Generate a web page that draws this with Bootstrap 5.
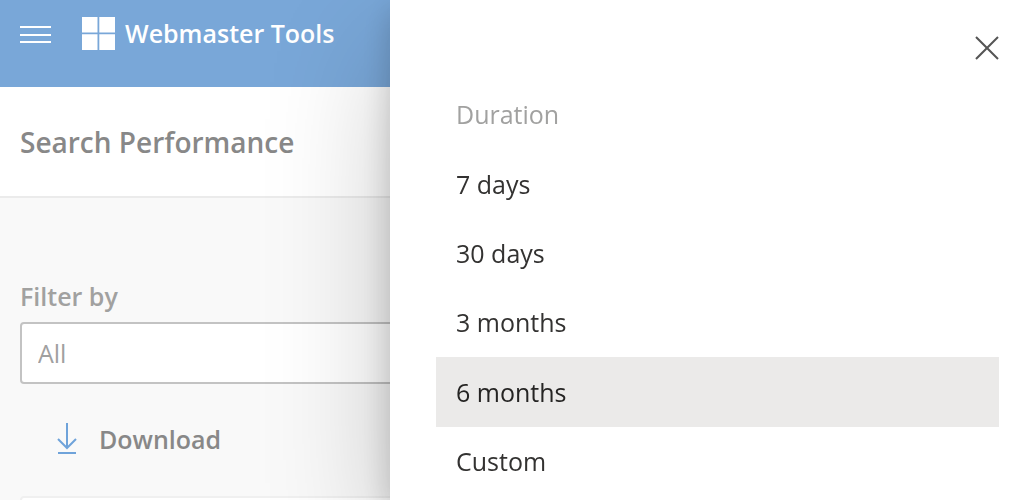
<!DOCTYPE html>
<html lang="en">
<head>
<meta charset="utf-8">
<meta name="viewport" content="width=device-width, initial-scale=1">
<title>Search Performance - Webmaster Tools</title>
<link href="https://cdn.jsdelivr.net/npm/bootstrap@5.3.0/dist/css/bootstrap.min.css" rel="stylesheet">
<style>
  body { font-family: "Segoe UI", "Open Sans", sans-serif; font-size: 25px; line-height: 35px; background: #f9f9f9; color: #888; height: 100vh; overflow: hidden; }
  .app-bar { background: #79a7d8; height: 87px; padding: 0 20px 21px; gap: 30px; }
  .app-bar .btn { padding-top: 4px; }
  .brand-name { font-size: 25px; font-weight: 600; gap: 10px; }
  .page-head { background: #fff; border-bottom: 2px solid #ebebeb; padding: 37px 20px 36px; }
  .page-title { font-size: 28px; line-height: 36px; font-weight: 600; }
  .page-body { padding: 80px 20px 0; }
  .filter-label { color: #a1a1a0; font-weight: 600; margin-bottom: 8px; line-height: 36px; }
  .filter-box { height: 62px; border: 2px solid #c3c3c3; border-radius: 4px; color: #a0a09f; font-size: 25px; padding: 0 16px; background-color: #fff; }
  .download-btn { color: #888; font-size: 25px; line-height: 35px; font-weight: 600; padding: 0; margin: 38px 0 0 36px; gap: 22px; }
  .download-btn svg { margin-bottom: 2px; }
  .result-panel { height: 120px; margin-top: 39px; border: 2px solid #f0f0f0; border-radius: 4px; background: #fff; }
  .duration-panel.offcanvas { --bs-offcanvas-width: calc(100% - 390px); --bs-offcanvas-bg: #fff; border: 0; box-shadow: 0 51px 115px rgba(0,0,0,.22), 0 10px 29px rgba(0,0,0,.18); padding: 0 25px 0 46px; overflow: hidden; transition: none; outline: 0; }
  .panel-top { height: 80px; padding-top: 16px; }
  .panel-label, .duration-list .list-group-item { font-size: 25px; line-height: 35px; padding: 17px 20px; height: 69px; flex-shrink: 0; }
  .panel-label { color: #a1a1a0; font-weight: 400; margin: 0 0 1px; }
  .duration-list.list-group { --bs-list-group-border-width: 0px; }
  .duration-list .list-group-item { color: #333231; border-radius: 0; }
  .duration-list .list-group-item.active { background: #ebeae9; color: #252423; height: 70px; }
</style>
</head>
<body>
<header class="app-bar d-flex align-items-center">
  <button class="btn px-0 pb-0 border-0 d-flex" type="button" aria-label="Menu">
    <svg width="32" height="20" viewBox="0 0 32 20" stroke="#fff" stroke-width="2"><path d="M0 2h31M0 10h31M0 17h31"/></svg>
  </button>
  <a class="brand-name d-flex align-items-center text-white text-decoration-none" href="#">
    <svg width="33" height="33" viewBox="0 0 33 33" fill="#fff"><path d="M0 0h15.500v15.500H0zM17.300 0H33v15.500H17.300zM0 17.300h15.500V33H0zM17.300 17.300H33V33H17.300z"/></svg>
    <span>Webmaster Tools</span>
  </a>
</header>
<main>
  <div class="page-head"><h1 class="page-title m-0">Search Performance</h1></div>
  <div class="page-body">
    <label class="filter-label d-block" for="filter">Filter by</label>
    <input class="filter-box form-control" id="filter" type="text" value="All">
    <button class="download-btn btn border-0 d-flex align-items-center" type="button">
      <svg width="21" height="32" viewBox="0 0 21 32" fill="none" stroke="#6fa3da" stroke-width="2"><path d="M11 0v25M2 16l9 9 9-9M2 30h18"/></svg>
      <span>Download</span>
    </button>
    <div class="result-panel"></div>
  </div>
</main>
<aside class="duration-panel offcanvas offcanvas-end show" tabindex="-1" aria-labelledby="duration" data-bs-backdrop="false" data-bs-scroll="true">
  <div class="panel-top d-flex justify-content-end align-items-start">
    <button class="btn p-0 border-0 d-flex" type="button" aria-label="Close" data-bs-dismiss="offcanvas">
      <svg width="24" height="64" viewBox="0 0 24 64" stroke="#555" stroke-width="2"><path d="M1 21l22 22M23 21L1 43"/></svg>
    </button>
  </div>
  <h2 class="panel-label" id="duration">Duration</h2>
  <div class="duration-list list-group">
    <button class="list-group-item list-group-item-action" type="button">7 days</button>
    <button class="list-group-item list-group-item-action" type="button">30 days</button>
    <button class="list-group-item list-group-item-action" type="button">3 months</button>
    <button class="list-group-item list-group-item-action active" type="button" aria-current="true">6 months</button>
    <button class="list-group-item list-group-item-action" type="button">Custom</button>
  </div>
</aside>
<script src="https://cdn.jsdelivr.net/npm/bootstrap@5.3.0/dist/js/bootstrap.bundle.min.js"></script>
</body>
</html>
